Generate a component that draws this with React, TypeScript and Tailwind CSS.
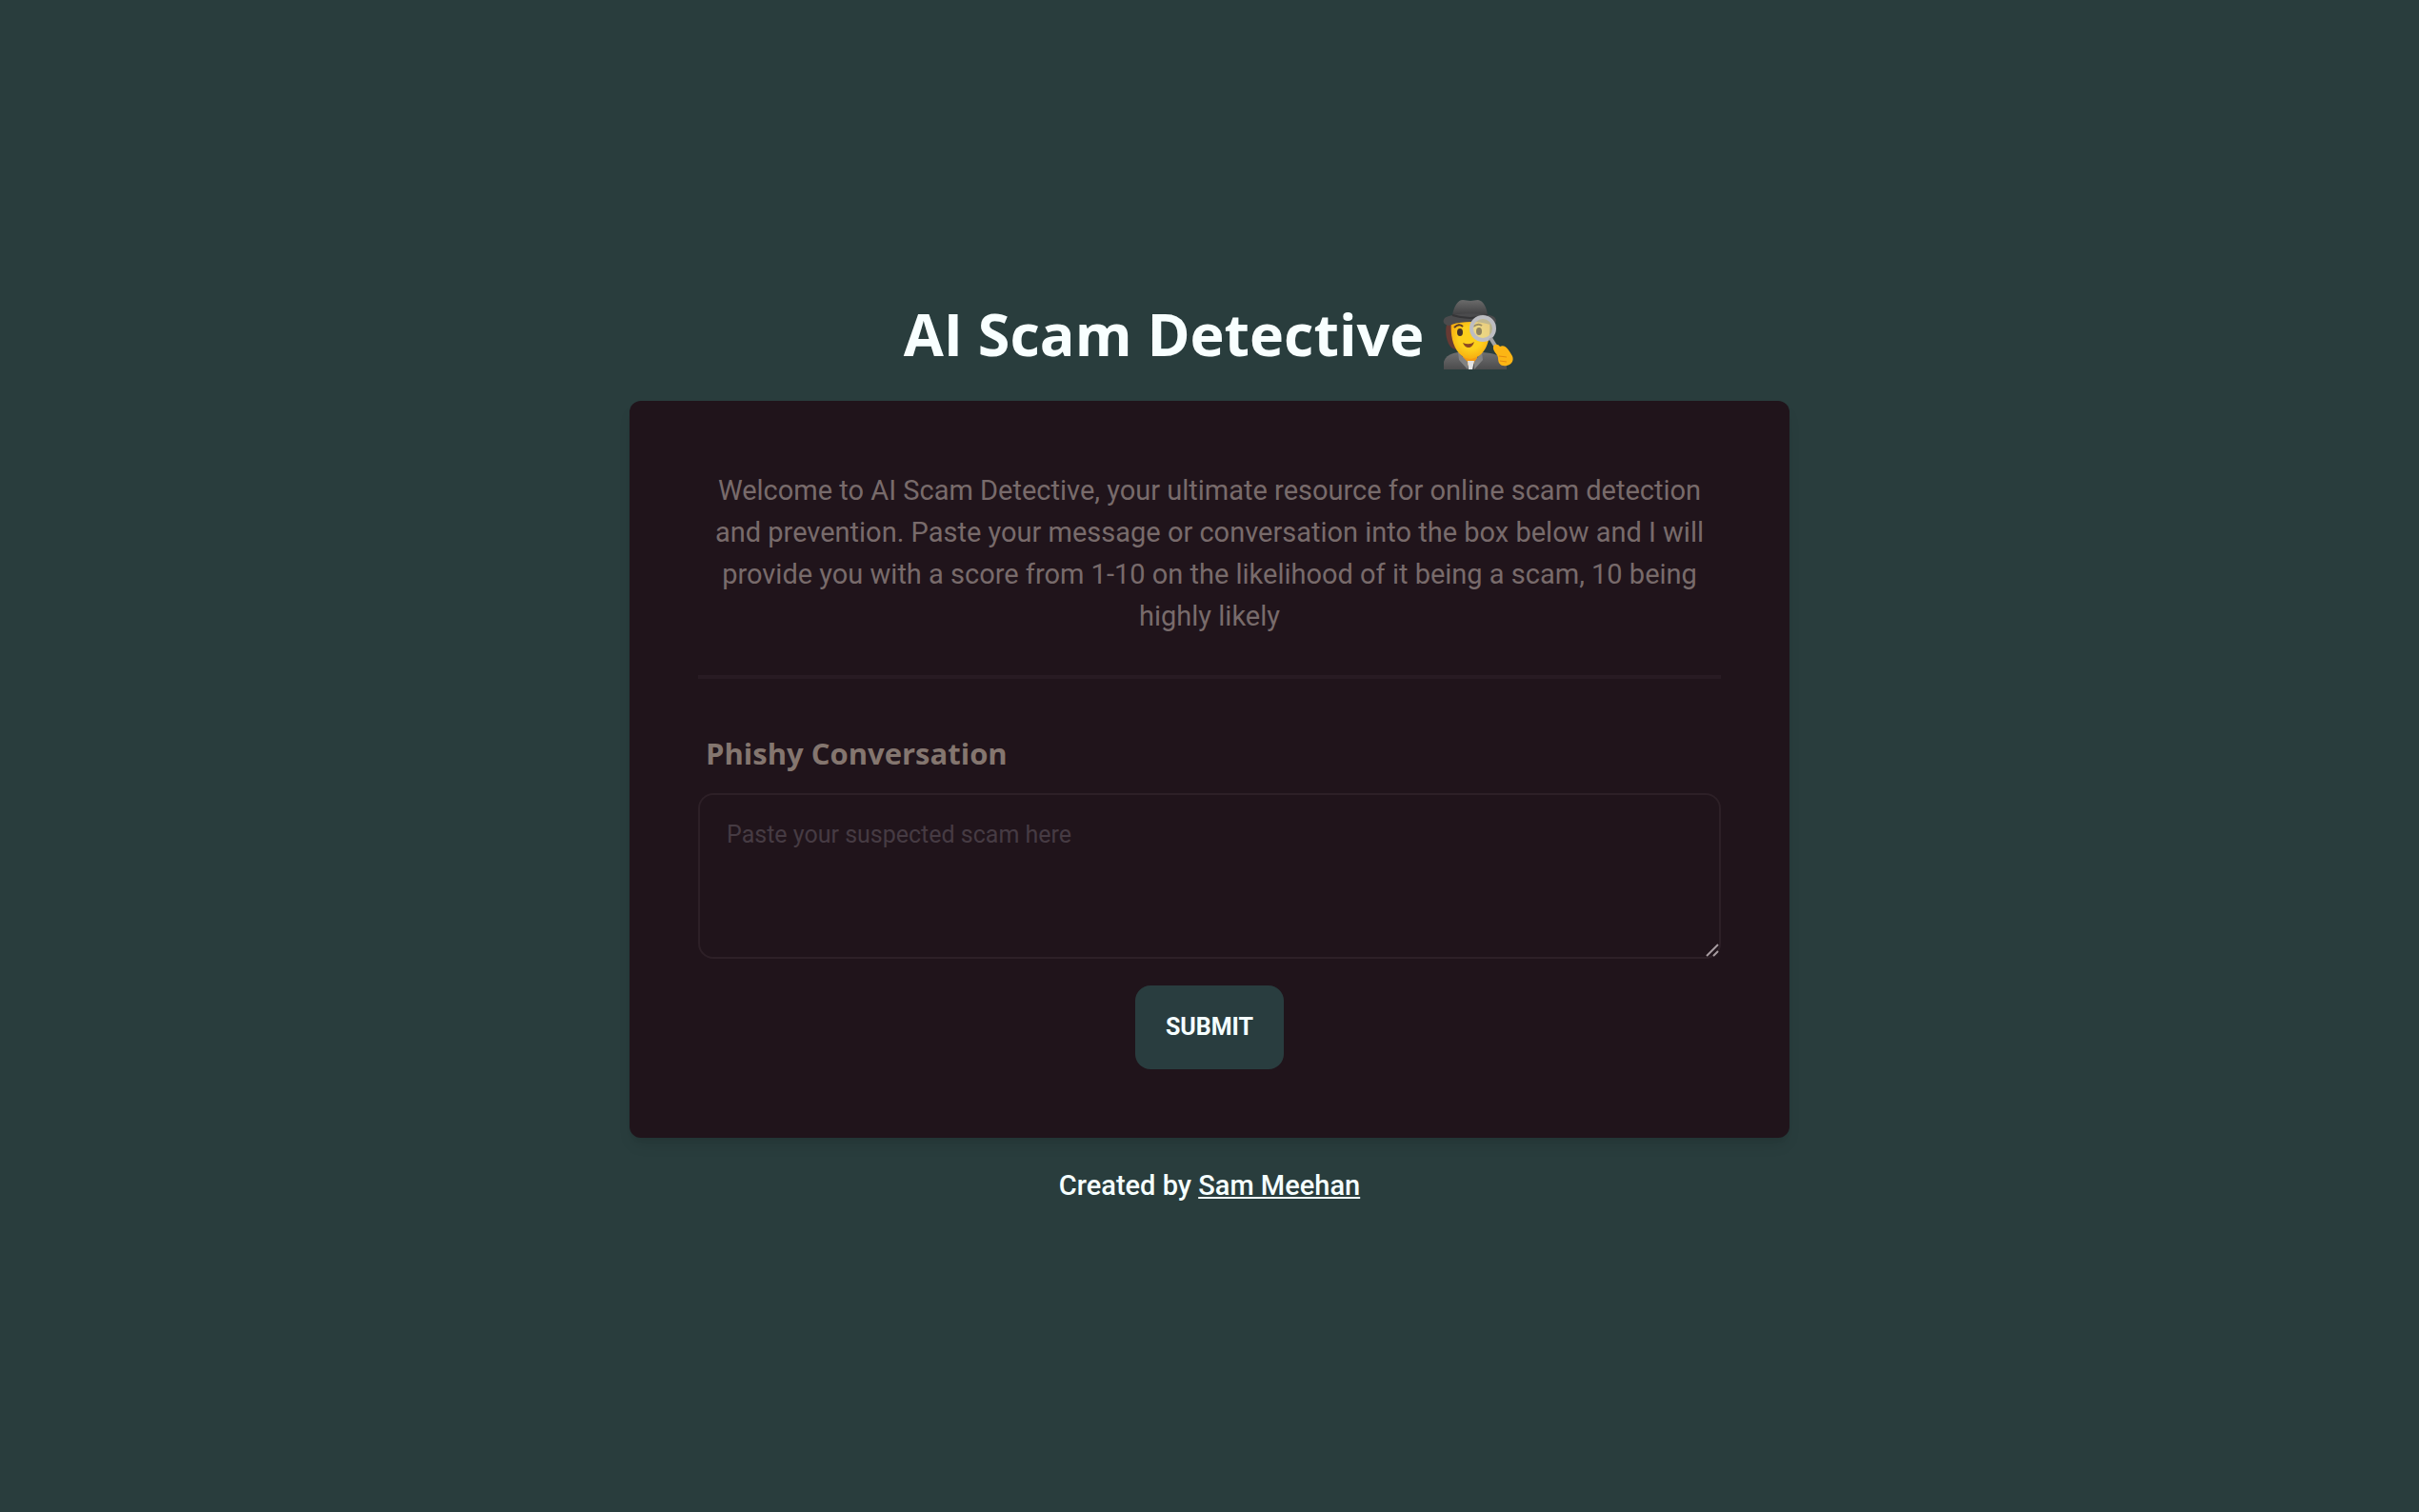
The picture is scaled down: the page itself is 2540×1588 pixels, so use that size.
function DetectiveIcon() {
  return (
    <svg viewBox="0 0 76 76" className="size-19 shrink-0" role="img" aria-label="Detective">
      <defs>
        <linearGradient id="hat" x1="0" y1="0" x2="0" y2="1">
          <stop offset="0" stopColor="#6b6b6b" />
          <stop offset="1" stopColor="#3f3f41" />
        </linearGradient>
        <radialGradient id="face" cx="0.5" cy="0.45" r="0.6">
          <stop offset="0.5" stopColor="#fdd01c" />
          <stop offset="1" stopColor="#f5a70f" />
        </radialGradient>
        <linearGradient id="coat" x1="0" y1="0" x2="0" y2="1">
          <stop offset="0" stopColor="#6f6f70" />
          <stop offset="1" stopColor="#4c4c4d" />
        </linearGradient>
      </defs>
      <path d="M5 24c-3 9-2 18 1 24 2 4 4 5 8 6l30-1c4-7 5-19 2-29z" fill="#673a33" />
      <path d="M1 75V67c2-6 7-9 15-10h26c11 1 20 3 25 11v7z" fill="url(#coat)" />
      <path d="M21 56h15v8l-7 9-8-8z" fill="#f59a12" />
      <path d="M26 66h7l-2 9h-4z" fill="#e3e3e3" />
      <path d="m16 57 1 8 9 10V67zM41 57l1 8-9 10V67z" fill="#828282" />
      <path d="M9 24c-2 19 4 38 19 40 17-1 23-20 21-40z" fill="url(#face)" />
      <ellipse cx="18" cy="36" rx="3" ry="4" fill="#443329" />
      <path d="M12 31q5-5 9-1" fill="none" stroke="#5a3c28" strokeWidth="2" />
      <path d="M21 47q7 3 12-1-2 6-6 6-4 0-6-5z" fill="#8d4a22" />
      <path d="M10 18C12 8 16 2 21 2c3 0 5 1 8 1s5-1 8-1c6 1 9 8 10 16z" fill="url(#hat)" />
      <path d="M2 21c7-6 44-6 52-1 4 4 1 8-4 8-14-4-30-4-44 1-5-1-7-4-4-8z" fill="#4b4b4d" />
      <path d="M10 18q19 6 37 0" fill="none" stroke="#353537" strokeWidth="2" />
      <circle cx="42" cy="32" r="13" fill="#e5d9a5" fillOpacity="0.75" />
      <ellipse cx="38" cy="35" rx="3" ry="4" fill="#8f835f" />
      <path d="M32 30q5-4 9-1" fill="none" stroke="#9e8f66" strokeWidth="2" />
      <circle cx="42" cy="32" r="12" fill="none" stroke="#bdbdc2" strokeWidth="4" />
      <path d="m50 42 5 8" stroke="#a3a3a5" strokeWidth="4" />
      <path d="M53 51c1-3 5-3 7 0 6-3 10 5 13 10 2 5-1 9-6 10-6 1-9-2-9-8 0-4-6-7-5-12z" fill="#fcb514" />
      <path d="m59 61 8 1m-7 4 7 1" stroke="#e48b0f" strokeWidth="1" />
    </svg>
  );
}

export default function App() {
  return (
    <main className="flex min-h-screen flex-col items-center justify-center bg-[#293d3d] px-6 pb-2 font-[Roboto,sans-serif] text-[29px] leading-11 text-[#f5ffff]">
      <h1 className="mb-8 flex items-center gap-5 font-['Open_Sans',sans-serif] text-[61px] leading-18 font-bold text-[#f8ffff]">
        AI Scam Detective
        <DetectiveIcon />
      </h1>
      <section className="w-full max-w-[1218px] rounded-xl bg-[#20141b] p-18 text-[#786b6b] shadow-lg">
        <p className="px-4 text-center">
          Welcome to AI Scam Detective, your ultimate resource for online scam detection and prevention. Paste
          your message or conversation into the box below and I will provide you with a score from 1-10 on the
          likelihood of it being a scam, 10 being highly likely
        </p>
        <hr className="my-10 border-t-4 border-[#281b23]" />
        <form className="flex flex-col" onSubmit={(e) => e.preventDefault()}>
          <label
            htmlFor="conversation"
            className="mb-5 px-2 pt-4 font-['Open_Sans',sans-serif] text-[31px] font-bold text-[#84766f]"
          >
            Phishy Conversation
          </label>
          <div className="relative flex">
            <textarea
              id="conversation"
              placeholder="Paste your suspected scam here"
              className="h-[174px] w-full resize-none rounded-2xl border-2 border-[#2d2027] bg-transparent px-7 py-5 text-[25px] leading-11 outline-none placeholder:text-[#463b43]"
            />
            <svg viewBox="0 0 14 14" className="absolute right-0.5 bottom-0.5 size-3.5" aria-hidden="true">
              <path d="M1 13 13 1M8 13l5-5" stroke="#a69ba0" strokeWidth="2" />
            </svg>
          </div>
          <button
            type="submit"
            className="mt-7 h-22 self-center rounded-2xl bg-[#293d3f] px-8 text-[25px] font-bold text-[#f5ffff]"
          >
            SUBMIT
          </button>
        </form>
      </section>
      <footer className="mt-7 font-medium">
        Created by{" "}
        <a href="#sam-meehan" className="underline">
          Sam Meehan
        </a>
      </footer>
    </main>
  );
}
